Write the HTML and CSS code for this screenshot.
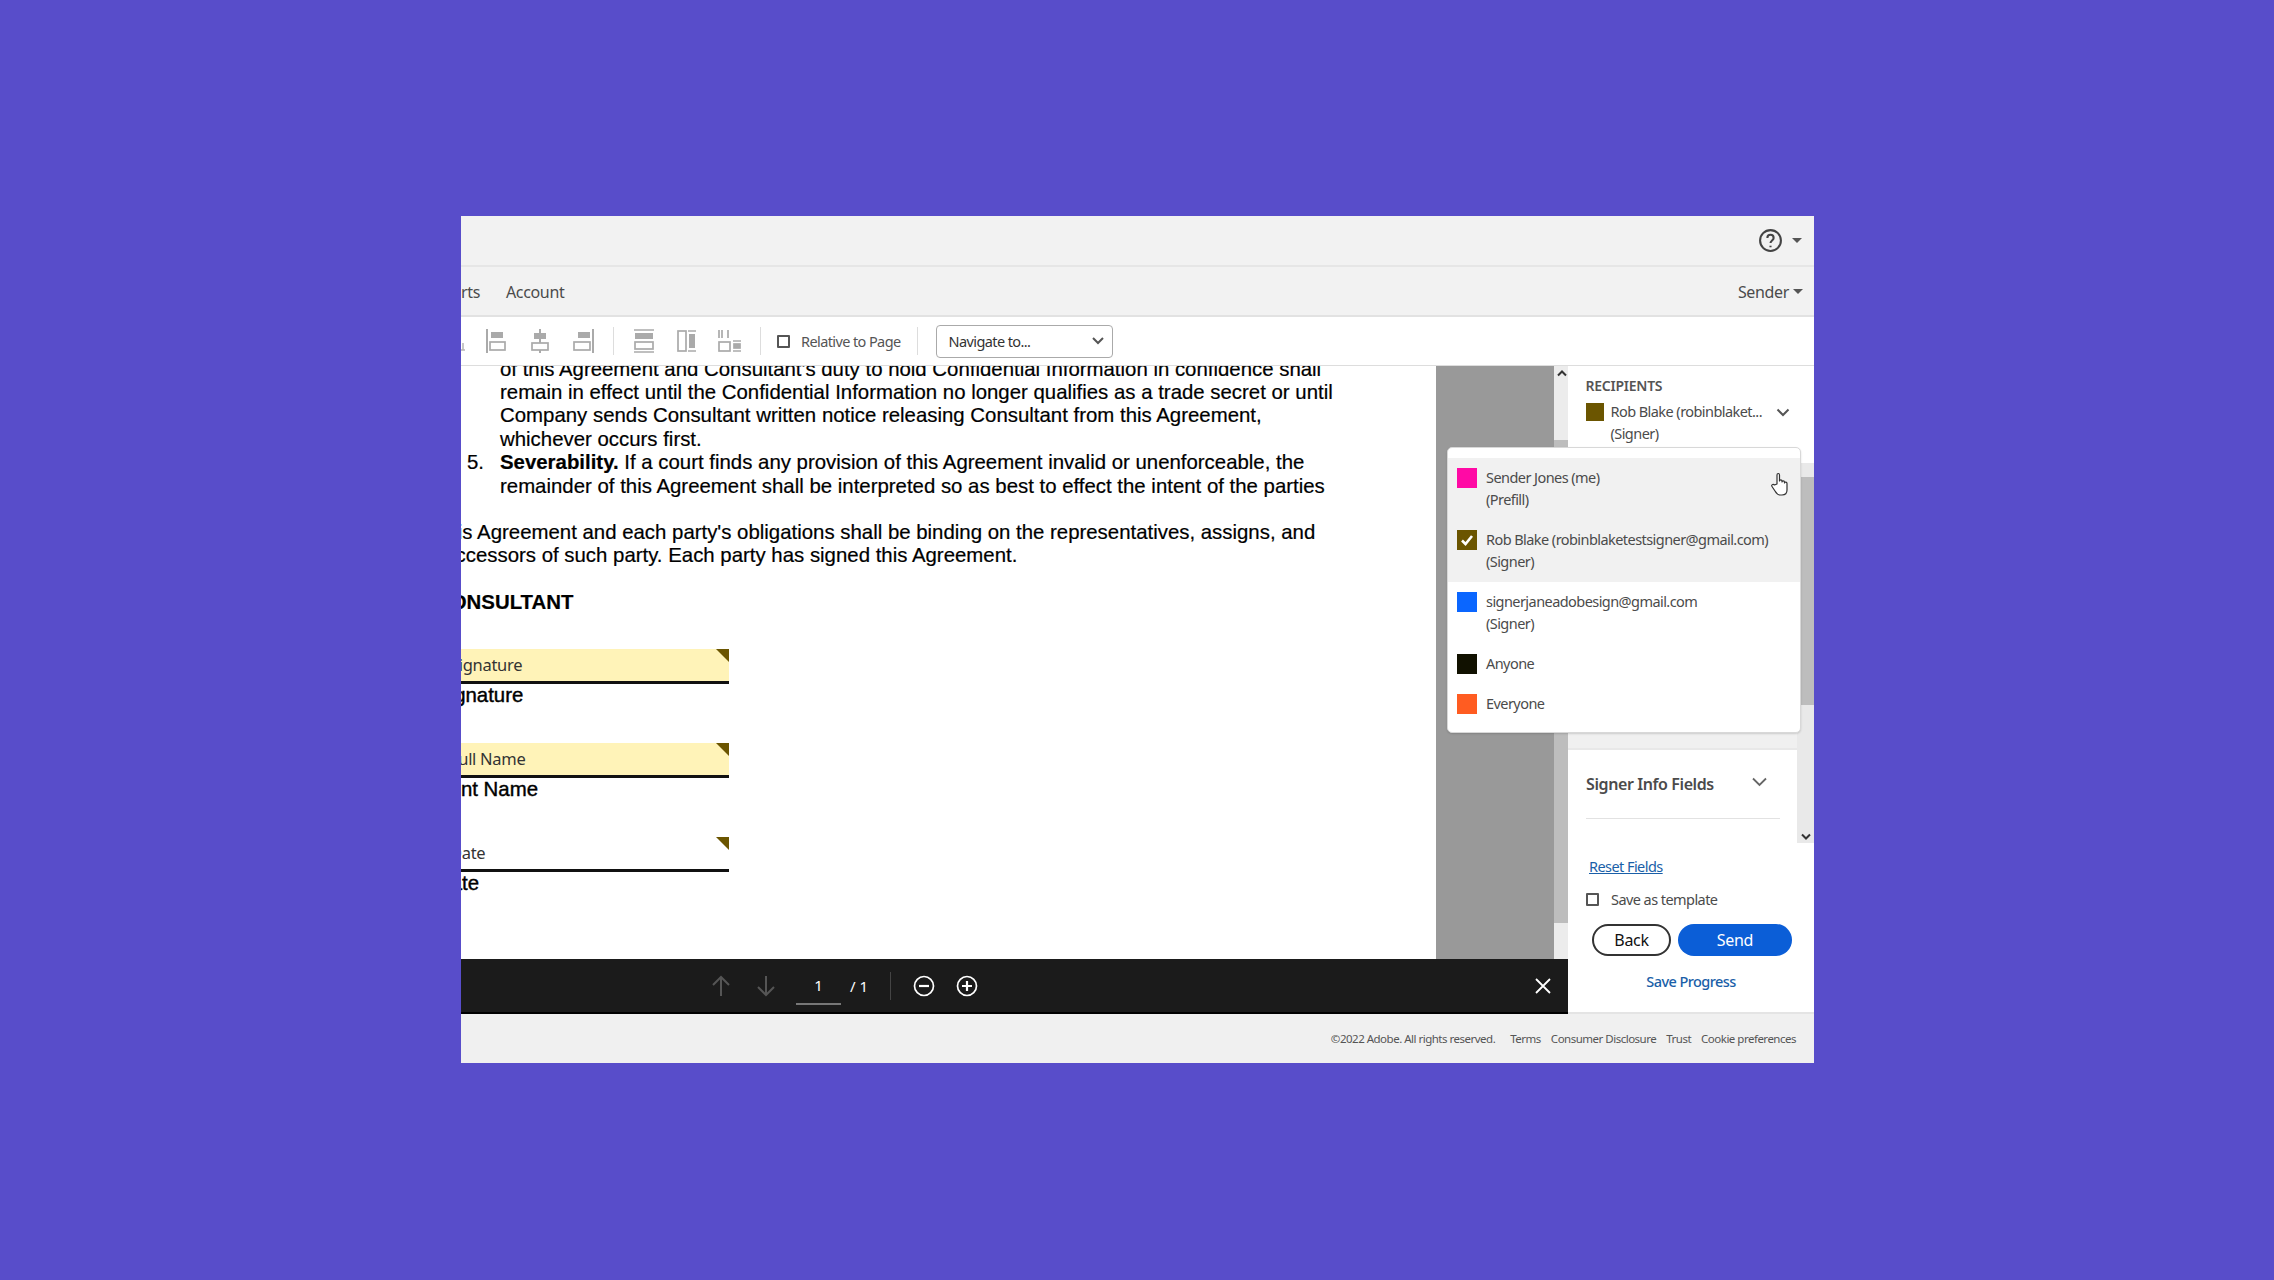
FILE: index.html
```html
<!DOCTYPE html>
<html lang="en">
<head>
    <meta charset="UTF-8">
    <title>Prepare Agreement</title>
    <link rel="stylesheet" href="styles.css">
</head>
<body>
    <div id="window">
        <div class="title-bar">
            <svg class="help-icon" width="25" height="25" viewBox="0 0 24 24" fill="none" stroke="#444" stroke-width="2"><circle cx="12" cy="12" r="10"/><path d="M9 9.500c0-4 6-4 6 0 0 2.500-3 2.500-3 5"/><path d="M12 17v1.500"/></svg>
            <span class="caret"></span>
        </div>
        <div class="nav-bar">
            <a class="nav-clipped">rts</a>
            <a class="nav-link">Account</a>
            <span class="role">Sender</span>
            <span class="caret"></span>
        </div>
        <div class="tool-bar">
            <svg class="tool-stub" width="5" height="24" viewBox="0 0 5 24" fill="none" stroke="#b5b5b5" stroke-width="1.500"><path d="M2 14v7M0 21h4"/></svg>
            <svg class="tool" width="24" height="24" viewBox="0 0 24 24" fill="none" stroke="#aaa" stroke-width="2"><path d="M2 0v24"/><rect x="6" y="3" width="12" height="6" fill="#aaa" stroke="none"/><rect x="5" y="13" width="15" height="8" stroke-width="1.700"/></svg>
            <svg class="tool" width="24" height="24" viewBox="0 0 24 24" fill="none" stroke="#aaa" stroke-width="2"><path d="M12 0v24"/><rect x="6" y="4" width="12" height="6" fill="#aaa" stroke="none"/><rect x="4" y="14" width="16" height="7" fill="#fff" stroke-width="1.700"/></svg>
            <svg class="tool" width="24" height="24" viewBox="0 0 24 24" fill="none" stroke="#aaa" stroke-width="2"><path d="M22 0v24"/><rect x="7" y="3" width="12" height="6" fill="#aaa" stroke="none"/><rect x="3" y="13" width="16" height="8" stroke-width="1.700"/></svg>
            <span class="tool-sep"></span>
            <svg class="tool" width="24" height="24" viewBox="0 0 24 24" fill="none" stroke="#aaa" stroke-width="1.500"><path d="M2 1h20M2 23h20"/><rect x="3" y="4" width="18" height="6" fill="#aaa" stroke="none"/><rect x="3" y="13" width="18" height="7" stroke-width="1.700"/></svg>
            <svg class="tool" width="24" height="24" viewBox="0 0 24 24" fill="none" stroke="#aaa" stroke-width="1.500"><rect x="3" y="2" width="8" height="20" stroke-width="1.700"/><path d="M13 2h8M13 22h8"/><rect x="14" y="5" width="6" height="14" fill="#aaa" stroke="none"/></svg>
            <svg class="tool" width="24" height="24" viewBox="0 0 24 24" fill="none" stroke="#aaa" stroke-width="1.700"><path d="M1 1v8M4 1v8M10 1v8"/><rect x="1" y="13" width="11" height="9"/><path d="M15 12h8M15 22h8"/><rect x="16" y="15" width="6" height="4" fill="#aaa"/></svg>
            <span class="tool-sep"></span>
            <span class="check-box"></span>
            <span class="tool-label">Relative to Page</span>
            <span class="tool-sep sep-wide"></span>
            <div class="navigate-select">
                <span>Navigate to...</span>
                <svg width="12" height="8" viewBox="0 0 12 8" fill="none" stroke="#555" stroke-width="2"><path d="M1 1l5 5 5-5"/></svg>
            </div>
        </div>
        <div class="main">
            <div class="doc-column">
                <div class="doc-view">
                    <div class="page">
                        <div class="page-inner">
                            <div class="clause">
                                <div>of this Agreement and Consultant's duty to hold Confidential Information in confidence shall</div>
                                <div>remain in effect until the Confidential Information no longer qualifies as a trade secret or until</div>
                                <div>Company sends Consultant written notice releasing Consultant from this Agreement,</div>
                                <div>whichever occurs first.</div>
                            </div>
                            <div class="clause numbered">
                                <span class="clause-num">5.</span>
                                <div><b>Severability.</b> If a court finds any provision of this Agreement invalid or unenforceable, the</div>
                                <div>remainder of this Agreement shall be interpreted so as best to effect the intent of the parties</div>
                            </div>
                            <div class="closing">
                                <div>This Agreement and each party's obligations shall be binding on the representatives, assigns, and</div>
                                <div>successors of such party. Each party has signed this Agreement.</div>
                            </div>
                            <div class="party">CONSULTANT</div>
                            <div class="sign-field filled"><span>Signature</span></div>
                            <div class="sign-label">Signature</div>
                            <div class="sign-field filled"><span>Full Name</span></div>
                            <div class="sign-label">Print Name</div>
                            <div class="sign-field"><span>Date</span></div>
                            <div class="sign-label">Date</div>
                        </div>
                    </div>
                    <div class="gray-area"></div>
                    <div class="doc-scroll">
                        <svg class="scroll-up" width="10" height="7" viewBox="0 0 10 7" fill="none" stroke="#333" stroke-width="2"><path d="M1 5.500l4-4 4 4"/></svg>
                        <div class="doc-thumb"></div>
                    </div>
                </div>
                <div class="pager">
                    <svg class="pager-arrow" width="20" height="22" viewBox="0 0 20 22" fill="none" stroke="#555" stroke-width="2"><path d="M10 21V2M2 10l8-8 8 8"/></svg>
                    <svg class="pager-arrow" width="20" height="22" viewBox="0 0 20 22" fill="none" stroke="#555" stroke-width="2"><path d="M10 1v19M2 12l8 8 8-8"/></svg>
                    <span class="page-input">1</span>
                    <span class="page-total">/ 1</span>
                    <span class="pager-sep"></span>
                    <svg class="zoom-out" width="22" height="22" viewBox="0 0 22 22" fill="none" stroke="#fff" stroke-width="1.700"><circle cx="11" cy="11" r="9.500"/><path d="M6 11h10" stroke-width="2.200"/></svg>
                    <svg class="zoom-in" width="22" height="22" viewBox="0 0 22 22" fill="none" stroke="#fff" stroke-width="1.700"><circle cx="11" cy="11" r="9.500"/><path d="M6 11h10M11 6v10" stroke-width="2.200"/></svg>
                    <svg class="pager-close" width="16" height="16" viewBox="0 0 16 16" fill="none" stroke="#fff" stroke-width="1.800"><path d="M1 1l14 14M15 1L1 15"/></svg>
                </div>
            </div>
            <div class="side-panel">
                <div class="recipients">
                    <div class="recipients-title">RECIPIENTS</div>
                    <div class="recipient-pick">
                        <span class="swatch small olive"></span>
                        <div class="recipient-text">Rob Blake (robinblaket...<br>(Signer)</div>
                        <svg width="14" height="9" viewBox="0 0 14 9" fill="none" stroke="#555" stroke-width="2"><path d="M1.500 1.500L7 7l5.500-5.500"/></svg>
                    </div>
                </div>
                <div class="fields-scroll">
                    <div class="fields-body">
                        <div class="fields-gap"></div>
                        <div class="fields-section">
                            <div class="fields-head">
                                <span>Signer Info Fields</span>
                                <svg width="15" height="10" viewBox="0 0 15 10" fill="none" stroke="#666" stroke-width="1.800"><path d="M1 1.500l6.500 6.500L14 1.500"/></svg>
                            </div>
                            <div class="fields-rule"></div>
                        </div>
                    </div>
                    <div class="fields-bar">
                        <div class="fields-thumb"></div>
                        <svg class="scroll-down" width="10" height="7" viewBox="0 0 10 7" fill="none" stroke="#333" stroke-width="2"><path d="M1 1.500l4 4 4-4"/></svg>
                    </div>
                </div>
                <a class="reset-link">Reset Fields</a>
                <label class="save-template"><span class="check-box"></span>Save as template</label>
                <div class="actions">
                    <button type="button" class="btn-back">Back</button>
                    <button type="button" class="btn-send">Send</button>
                </div>
                <a class="save-progress">Save Progress</a>
            </div>
            <div class="recipient-menu">
                <div class="menu-item hover">
                    <span class="swatch pink"></span>
                    <div>Sender Jones (me)<br>(Prefill)</div>
                </div>
                <div class="menu-item hover">
                    <span class="swatch olive"><svg width="14" height="12" viewBox="0 0 14 12" fill="none" stroke="#fff" stroke-width="2.600"><path d="M2 6.500L5.500 10 12 2"/></svg></span>
                    <div>Rob Blake (robinblaketestsigner@gmail.com)<br>(Signer)</div>
                </div>
                <div class="menu-item">
                    <span class="swatch blue"></span>
                    <div>signerjaneadobesign@gmail.com<br>(Signer)</div>
                </div>
                <div class="menu-item single">
                    <span class="swatch black"></span>
                    <div>Anyone</div>
                </div>
                <div class="menu-item single">
                    <span class="swatch orange"></span>
                    <div>Everyone</div>
                </div>
                <svg class="hand-cursor" width="18" height="24" viewBox="0 0 18 24" fill="#fff" stroke="#333" stroke-width="1.200" stroke-linejoin="round"><path d="M6 12V3c0-2 2.500-2 2.500 0v6c0-1.500 2.500-1.500 2.500 0v1c0-1.500 2.500-1.500 2.500 0v1c0-1.200 2.500-1.200 2.500.5V18c0 3-2 5-5 5H9c-2.500 0-3.500-1.500-5-4l-3-4.500c-1-1.500 1-3 2.500-1.500z"/></svg>
            </div>
        </div>
        <div class="footer">
            <span class="copyright">©2022 Adobe. All rights reserved.</span>
            <a>Terms</a>
            <a>Consumer Disclosure</a>
            <a>Trust</a>
            <a>Cookie preferences</a>
        </div>
    </div>
</body>
</html>
```

FILE: styles.css
```css
* {
    box-sizing: border-box;
}
body {
    margin: 0;
    height: 1280px;
    overflow: hidden;
    padding: 216px 460px 0 461px;
    background-color: #584dca;
    font-family: "Noto Sans", sans-serif;
    font-size: 14.500px;
    color: #4b4b4b;
}
#window {
    width: 1353px;
    height: 847px;
    display: flex;
    flex-direction: column;
    position: relative;
    background-color: #f2f2f2;
}
.caret {
    width: 0;
    height: 0;
    border-left: 5px solid transparent;
    border-right: 5px solid transparent;
    border-top: 5px solid #555;
}
.title-bar {
    height: 51px;
    flex: none;
    display: flex;
    align-items: center;
    justify-content: flex-end;
    gap: 9px;
    padding: 0 12px 0 0;
    border-bottom: 2px solid #e6e6e6;
}
.nav-bar {
    height: 50px;
    flex: none;
    display: flex;
    align-items: center;
    padding: 2px 11px 0 0;
    border-bottom: 2px solid #e2e2e2;
    font-size: 16px;
    letter-spacing: -0.35px;
}
.nav-clipped {
    width: 45px;
}
.role {
    margin-left: auto;
    margin-right: 4px;
}
.nav-bar .caret {
    margin-top: -2px;
}
.tool-bar {
    height: 49px;
    flex: none;
    display: flex;
    align-items: center;
    gap: 19px;
    background-color: #fff;
    border-bottom: 1px solid #ddd;
}
.tool {
    flex: none;
}
.tool-sep {
    width: 1px;
    height: 28px;
    flex: none;
    background-color: #ddd;
    margin: 0 -1px;
}
.sep-wide {
    margin: 0 -1px 0 -3px;
}
.check-box {
    width: 13px;
    height: 13px;
    flex: none;
    border: 2px solid #555;
    border-radius: 1px;
    background-color: #fff;
}
.tool-bar .check-box {
    margin: 0 -8px 0 -2px;
}
.tool-label {
    font-size: 14.500px;
    letter-spacing: -0.6px;
    color: #555;
}
.navigate-select {
    width: 177px;
    height: 33px;
    display: flex;
    align-items: center;
    justify-content: space-between;
    padding: 0 8px 0 12px;
    border: 1px solid #aaa;
    border-radius: 4px;
    font-size: 14.500px;
    letter-spacing: -0.6px;
    color: #333;
}
.main {
    flex: 1;
    display: flex;
    position: relative;
    min-height: 0;
}
.doc-column {
    width: 1107px;
    flex: none;
    display: flex;
    flex-direction: column;
}
.doc-view {
    flex: 1;
    display: flex;
    min-height: 0;
    overflow: hidden;
}
.page {
    width: 975px;
    flex: none;
    background-color: #fff;
    overflow: hidden;
}
.page-inner {
    margin: -8.5px 0 0 -25px;
    font-family: "Liberation Sans", Arial, sans-serif;
    font-size: 20.400px;
    line-height: 23.400px;
    color: #000;
    white-space: nowrap;
    -webkit-text-stroke: 0.2px #000;
}
.clause {
    padding-left: 64px;
    position: relative;
}
.clause-num {
    position: absolute;
    left: 31px;
    top: 0;
}
.closing {
    margin: 23px 0 0 -2px;
}
.party {
    margin-top: 23px;
    font-weight: bold;
}
.sign-field {
    width: 293px;
    height: 35px;
    margin-top: 34.500px;
    padding-left: 14px;
    display: flex;
    align-items: center;
    position: relative;
    border-bottom: 3px solid #111;
    font-family: "Noto Sans", sans-serif;
    font-size: 16.500px;
    letter-spacing: -0.3px;
    color: #333;
    -webkit-text-stroke: 0;
}
.sign-field.filled {
    background-color: #fff3b8;
}
.sign-field::after {
    content: "";
    position: absolute;
    top: 0;
    right: 0;
    border-top: 13px solid #6b5500;
    border-left: 13px solid transparent;
}
.sign-label {
    height: 23px;
    -webkit-text-stroke: 0.4px #000;
}
.sign-label + .sign-field {
    margin-top: 36px;
}
.gray-area {
    width: 118px;
    flex: none;
    background-color: #999;
}
.doc-scroll {
    width: 15px;
    flex: none;
    position: relative;
    background-color: #ececec;
}
.scroll-up {
    position: absolute;
    top: 4px;
    left: 3px;
}
.doc-thumb {
    position: absolute;
    top: 74px;
    left: 0;
    right: 0;
    height: 483px;
    background-color: #bdbdbd;
}
.pager {
    height: 55px;
    flex: none;
    display: flex;
    align-items: center;
    position: relative;
    padding-left: 250px;
    background-color: #1b1b1b;
    border-bottom: 2px solid #000;
    color: #fff;
    font-size: 15px;
}
.pager-arrow {
    margin-right: 25px;
}
.page-input {
    width: 45px;
    height: 32px;
    margin: 6px 0 0 -5px;
    text-align: center;
    line-height: 25px;
    border-bottom: 2px solid #777;
}
.page-total {
    margin-left: 9px;
}
.pager-sep {
    width: 1px;
    height: 28px;
    margin: 0 22px;
    background-color: #444;
}
.zoom-in {
    margin-left: 21px;
}
.pager-close {
    position: absolute;
    right: 17px;
    top: 19px;
}
.side-panel {
    width: 246px;
    flex: none;
    display: flex;
    flex-direction: column;
    background-color: #fff;
    border-bottom: 2px solid #e4e4e4;
}
.recipients {
    height: 97px;
    flex: none;
    padding: 10px 0 0 17.500px;
}
.recipients-title {
    font-size: 14px;
    font-weight: 600;
    letter-spacing: -0.25px;
    color: #555;
    line-height: 20px;
}
.recipient-pick {
    display: flex;
    align-items: flex-start;
    margin-top: 7px;
}
.recipient-text {
    width: 165px;
    margin: -3px 0 0 7px;
    line-height: 22px;
    letter-spacing: -0.56px;
    white-space: nowrap;
}
.recipient-pick svg {
    margin-top: 5px;
}
.swatch {
    width: 20px;
    height: 20px;
    flex: none;
    display: flex;
    align-items: center;
    justify-content: center;
}
.swatch.small {
    width: 18px;
    height: 18px;
}
.olive {
    background-color: #6b5500;
}
.pink {
    background-color: #ff0aa5;
}
.blue {
    background-color: #0a66ff;
}
.black {
    background-color: #111100;
}
.orange {
    background-color: #ff5c21;
}
.fields-scroll {
    height: 380px;
    flex: none;
    display: flex;
}
.fields-body {
    width: 229px;
    flex: none;
    display: flex;
    flex-direction: column;
}
.fields-gap {
    height: 287px;
    flex: none;
    background-color: #f0f0f0;
    border-bottom: 2px solid #e8e8e8;
}
.fields-section {
    padding: 0 17px 0 18px;
}
.fields-head {
    height: 68px;
    display: flex;
    align-items: center;
    justify-content: space-between;
    padding-right: 13px;
    font-size: 16px;
    font-weight: 600;
    letter-spacing: -0.4px;
    color: #4b4b4b;
}
.fields-head svg {
    margin-top: -5px;
}
.fields-rule {
    height: 1px;
    background-color: #e2e2e2;
}
.fields-bar {
    flex: 1;
    position: relative;
    background-color: #e9e9e9;
}
.fields-thumb {
    position: absolute;
    top: 14px;
    left: 0;
    right: 0;
    height: 228px;
    background-color: #bdbdbd;
}
.scroll-down {
    position: absolute;
    bottom: 3px;
    left: 4px;
}
.reset-link {
    margin: 13px 0 0 21px;
    color: #1a5fa8;
    text-decoration: underline;
    letter-spacing: -0.56px;
    line-height: 20px;
}
.save-template {
    display: flex;
    align-items: center;
    gap: 12px;
    margin: 13px 0 0 18px;
    letter-spacing: -0.56px;
    line-height: 20px;
}
.actions {
    display: flex;
    gap: 7px;
    margin: 15px 0 0 24px;
}
.actions button {
    height: 32px;
    border-radius: 16px;
    font-family: "Noto Sans", sans-serif;
    font-size: 16px;
    letter-spacing: -0.3px;
    padding: 0;
}
.btn-back {
    width: 79px;
    border: 2px solid #333;
    background-color: #fff;
    color: #111;
}
.btn-send {
    width: 114px;
    border: none;
    background-color: #0b5ed7;
    color: #fff;
}
.save-progress {
    margin-top: 15px;
    text-align: center;
    color: #1a5fa8;
    letter-spacing: -0.56px;
    font-weight: 500;
    line-height: 20px;
}
.recipient-menu {
    position: absolute;
    left: 986px;
    top: 81px;
    width: 354px;
    height: 286px;
    padding-top: 10px;
    background-color: #fff;
    border: 1px solid #d8d8d8;
    border-radius: 5px;
    box-shadow: 0 1px 2px rgba(0, 0, 0, 0.15);
    line-height: 22px;
    letter-spacing: -0.56px;
}
.menu-item {
    height: 62px;
    display: flex;
    gap: 9px;
    padding: 10px 0 0 9px;
}
.menu-item div {
    margin-top: -2px;
}
.menu-item.hover {
    background-color: #f1f1f1;
}
.menu-item.single {
    height: 40px;
    align-items: flex-start;
}
.hand-cursor {
    position: absolute;
    left: 323px;
    top: 24px;
}
.footer {
    height: 49px;
    flex: none;
    display: flex;
    align-items: center;
    justify-content: flex-end;
    gap: 10px;
    padding-right: 18px;
    background-color: #f0f0f0;
    font-size: 11.500px;
    letter-spacing: -0.5px;
    color: #555;
}
.copyright {
    margin-right: 5px;
}
```
